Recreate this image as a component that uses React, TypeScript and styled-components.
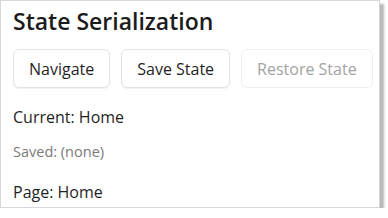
import { FC, useState } from 'react';
import styled, { createGlobalStyle } from 'styled-components';

const GlobalStyle = createGlobalStyle`
  html, body {
    margin: 0;
    padding: 0;
    background: #ffffff;
  }
  body {
    font-family: 'Open Sans', 'Noto Sans', sans-serif;
    color: #1f1f1f;
  }
`;

const Card = styled.div`
  box-sizing: border-box;
  width: 380px;
  height: 208px;
  background: #ffffff;
  border: 1px solid #d4d6dc;
  box-shadow: 4px 4px 2px rgba(0, 0, 0, 0.28);
  padding: 0 12px;
  display: flex;
  flex-direction: column;
`;

const Title = styled.h2`
  margin: 4px 0 0;
  font-size: 23px;
  line-height: 32px;
  font-weight: 600;
  color: #1c1c1c;
`;

const Toolbar = styled.div`
  display: flex;
  gap: 11px;
  margin-top: 12px;
`;

const Button = styled.button`
  flex-shrink: 0;
  white-space: nowrap;
  height: 39px;
  padding: 0 15px;
  background: #ffffff;
  border: 1px solid #e2e2e2;
  border-radius: 6px;
  font-family: inherit;
  font-size: 16px;
  color: ${props => (props.disabled ? '#a3a3a3' : '#1f1f1f')};
  border-color: ${props => (props.disabled ? '#efefef' : '#e2e2e2')};
  box-shadow: ${props => (props.disabled ? 'none' : '0 1px 1px rgba(0, 0, 0, 0.06)')};
`;

const Line = styled.div<{ $muted?: boolean }>`
  font-size: ${props => (props.$muted ? '14.5px' : '16px')};
  color: ${props => (props.$muted ? '#7a7a7a' : '#1f1f1f')};
  line-height: 20px;
  padding-bottom: ${props => (props.$muted ? '5px' : '0')};
`;

const Info = styled.div`
  display: flex;
  flex-direction: column;
  margin-top: 19px;
  gap: 15px;
`;

const App: FC = () => {
  const [page, setPage] = useState('Home');
  const [saved, setSaved] = useState<string | null>(null);

  return (
    <>
      <GlobalStyle />
      <Card>
        <Title>State Serialization</Title>
        <Toolbar>
          <Button onClick={() => setPage(page === 'Home' ? 'About' : 'Home')}>Navigate</Button>
          <Button onClick={() => setSaved(page)}>Save State</Button>
          <Button disabled={saved === null} onClick={() => saved && setPage(saved)}>
            Restore State
          </Button>
        </Toolbar>
        <Info>
          <Line>Current: {page}</Line>
          <Line $muted>Saved: {saved ?? '(none)'}</Line>
          <Line>Page: {page}</Line>
        </Info>
      </Card>
    </>
  );
};

export default App;
